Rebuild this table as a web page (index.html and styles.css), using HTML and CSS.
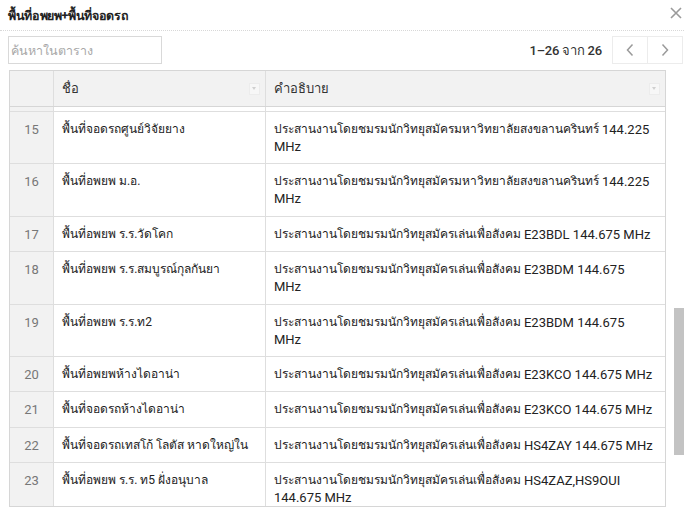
FILE: index.html
```html
<!DOCTYPE html>
<html lang="th">
<head>
<meta charset="utf-8">
<link rel="stylesheet" href="styles.css">
</head>
<body>
<div class="dialog">
  <div class="titlebar">
    <h1 class="title">พื้นที่อพยพ+พื้นที่จอดรถ</h1>
    <span class="close">
      <svg width="12" height="12" viewBox="0 0 12 12"><path d="M1 1L11 11M11 1L1 11" stroke="#9a9a9a" stroke-width="1.6" fill="none"/></svg>
    </span>
  </div>
  <div class="toolbar">
    <input class="search" type="text" placeholder="ค้นหาในตาราง">
    <div class="pager">
      <span class="count">1–26 จาก 26</span>
      <div class="pbtns">
        <span class="pbtn"><svg width="10" height="14" viewBox="0 0 10 14"><path d="M7.5 1.5L2.5 7L7.5 12.5" stroke="#9a9a9a" stroke-width="1.5" fill="none"/></svg></span>
        <span class="pbtn"><svg width="10" height="14" viewBox="0 0 10 14"><path d="M2.5 1.5L7.5 7L2.5 12.5" stroke="#9a9a9a" stroke-width="1.5" fill="none"/></svg></span>
      </div>
    </div>
  </div>
  <div class="tablewrap">
    <div class="table">
      <div class="row head">
        <div class="c num"></div>
        <div class="c name">ชื่อ<span class="filt"></span></div>
        <div class="c desc">คำอธิบาย<span class="filt"></span></div>
      </div>
      <div class="row stub">
        <div class="c num"></div><div class="c name"></div><div class="c desc"></div>
      </div>
      <div class="row"><div class="c num">15</div><div class="c name">พื้นที่จอดรถศูนย์วิจัยยาง</div><div class="c desc">ประสานงานโดยชมรมนักวิทยุสมัครมหาวิทยาลัยสงขลานครินทร์ <span class="en">144.225 MHz</span></div></div>
      <div class="row"><div class="c num">16</div><div class="c name">พื้นที่อพยพ ม.อ.</div><div class="c desc">ประสานงานโดยชมรมนักวิทยุสมัครมหาวิทยาลัยสงขลานครินทร์ <span class="en">144.225 MHz</span></div></div>
      <div class="row"><div class="c num">17</div><div class="c name">พื้นที่อพยพ ร.ร.วัดโคก</div><div class="c desc">ประสานงานโดยชมรมนักวิทยุสมัครเล่นเพื่อสังคม <span class="en">E23BDL 144.675 MHz</span></div></div>
      <div class="row"><div class="c num">18</div><div class="c name">พื้นที่อพยพ ร.ร.สมบูรณ์กุลกันยา</div><div class="c desc">ประสานงานโดยชมรมนักวิทยุสมัครเล่นเพื่อสังคม <span class="en">E23BDM 144.675<br>MHz</span></div></div>
      <div class="row"><div class="c num">19</div><div class="c name">พื้นที่อพยพ ร.ร.ท2</div><div class="c desc">ประสานงานโดยชมรมนักวิทยุสมัครเล่นเพื่อสังคม <span class="en">E23BDM 144.675<br>MHz</span></div></div>
      <div class="row"><div class="c num">20</div><div class="c name">พื้นที่อพยพห้างไดอาน่า</div><div class="c desc">ประสานงานโดยชมรมนักวิทยุสมัครเล่นเพื่อสังคม <span class="en">E23KCO 144.675 MHz</span></div></div>
      <div class="row"><div class="c num">21</div><div class="c name">พื้นที่จอดรถห้างไดอาน่า</div><div class="c desc">ประสานงานโดยชมรมนักวิทยุสมัครเล่นเพื่อสังคม <span class="en">E23KCO 144.675 MHz</span></div></div>
      <div class="row"><div class="c num">22</div><div class="c name">พื้นที่จอดรถเทสโก้ โลตัส หาดใหญ่ใน</div><div class="c desc">ประสานงานโดยชมรมนักวิทยุสมัครเล่นเพื่อสังคม <span class="en">HS4ZAY 144.675 MHz</span></div></div>
      <div class="row"><div class="c num">23</div><div class="c name">พื้นที่อพยพ ร.ร. ท5 ฝั่งอนุบาล</div><div class="c desc">ประสานงานโดยชมรมนักวิทยุสมัครเล่นเพื่อสังคม <span class="en">HS4ZAZ,HS9OUI<br>144.675 MHz</span></div></div>
    </div>
    <div class="scrolltrack"><div class="thumb"></div></div>
  </div>
</div>
</body>
</html>
```

FILE: styles.css
```css
html, body {
  margin: 0;
  padding: 0;
  background: #fff;
  overflow: hidden;
}
body {
  font-family: Roboto, "Liberation Sans", Arial, sans-serif;
  font-size: 13px;
  color: #222;
}
.dialog {
  width: 692px;
  height: 517px;
  overflow: hidden;
}
.titlebar {
  display: flex;
  align-items: center;
  justify-content: space-between;
  height: 30px;
  margin: 0 8px 0 0;
  border-bottom: 1px dotted #d8d8d8;
  padding-left: 8px;
}
.title {
  margin: 0;
  font-size: 12.5px;
  letter-spacing: -0.35px;
  font-weight: bold;
  color: #222;
  padding-top: 2px;
}
.close {
  display: flex;
  padding-right: 2px;
  padding-bottom: 4px;
}
.toolbar {
  display: flex;
  align-items: center;
  justify-content: space-between;
  padding: 4px 9px 0 8px;
  height: 30px;
}
.search {
  width: 154px;
  height: 28px;
  box-sizing: border-box;
  border: 1px solid #d9d9d9;
  font-family: inherit;
  font-size: 12.5px;
  padding: 0 2px;
  margin: 0;
  outline: none;
}
.search::placeholder {
  color: #a8a8a8;
}
.pager {
  display: flex;
  align-items: center;
  gap: 10px;
}
.count {
  font-weight: 500;
  color: #333;
  letter-spacing: -0.2px;
}
.pbtns {
  display: flex;
  border: 1px solid #ececec;
  height: 26px;
}
.pbtn {
  width: 34px;
  display: flex;
  align-items: center;
  justify-content: center;
}
.pbtn + .pbtn {
  border-left: 1px solid #ececec;
}
.tablewrap {
  display: flex;
  gap: 8px;
  padding: 5px 0 0 9px;
}
.table {
  width: 657px;
  height: 437px;
  overflow: hidden;
  border: 1px solid #d6d6d6;
  box-sizing: border-box;
}
.row {
  display: flex;
  border-bottom: 1px solid #dedede;
  line-height: 17px;
}
.c {
  padding: 9px 8px 8.4px 8px;
  font-size: 12px;
}
.en {
  font-size: 13px;
  vertical-align: top;
}
.num {
  width: 44px;
  box-sizing: border-box;
  flex: none;
  text-align: center;
  color: #777;
  background: #f2f2f2;
  border-right: 1px solid #dedede;
  padding-left: 0;
  padding-right: 0;
  font-size: 13px;
}
.name {
  width: 212px;
  box-sizing: border-box;
  flex: none;
  border-right: 1px solid #dedede;
}
.desc {
  flex: 1;
  box-sizing: border-box;
}
.head {
  background: #f2f2f2;
  height: 36px;
  box-sizing: border-box;
  border-bottom: 1px solid #d6d6d6;
}
.head .c {
  display: flex;
  align-items: center;
  justify-content: space-between;
  padding-top: 0;
  padding-bottom: 0;
  color: #333;
  font-size: 13px;
}
.filt {
  width: 9px;
  height: 10px;
  border: 1px solid #ececec;
  background: #f7f7f7;
  position: relative;
  margin-right: -3px;
}
.filt::after {
  content: "";
  position: absolute;
  left: 2px;
  top: 3px;
  border-left: 2.5px solid transparent;
  border-right: 2.5px solid transparent;
  border-top: 3px solid #d0d0d0;
}
.stub {
  height: 5px;
  box-sizing: border-box;
}
.stub .c {
  padding: 0;
}
.scrolltrack {
  width: 10px;
  display: flex;
  flex-direction: column;
}
.thumb {
  margin-top: 238px;
  height: 147px;
  background: #c3c3c3;
}
```
